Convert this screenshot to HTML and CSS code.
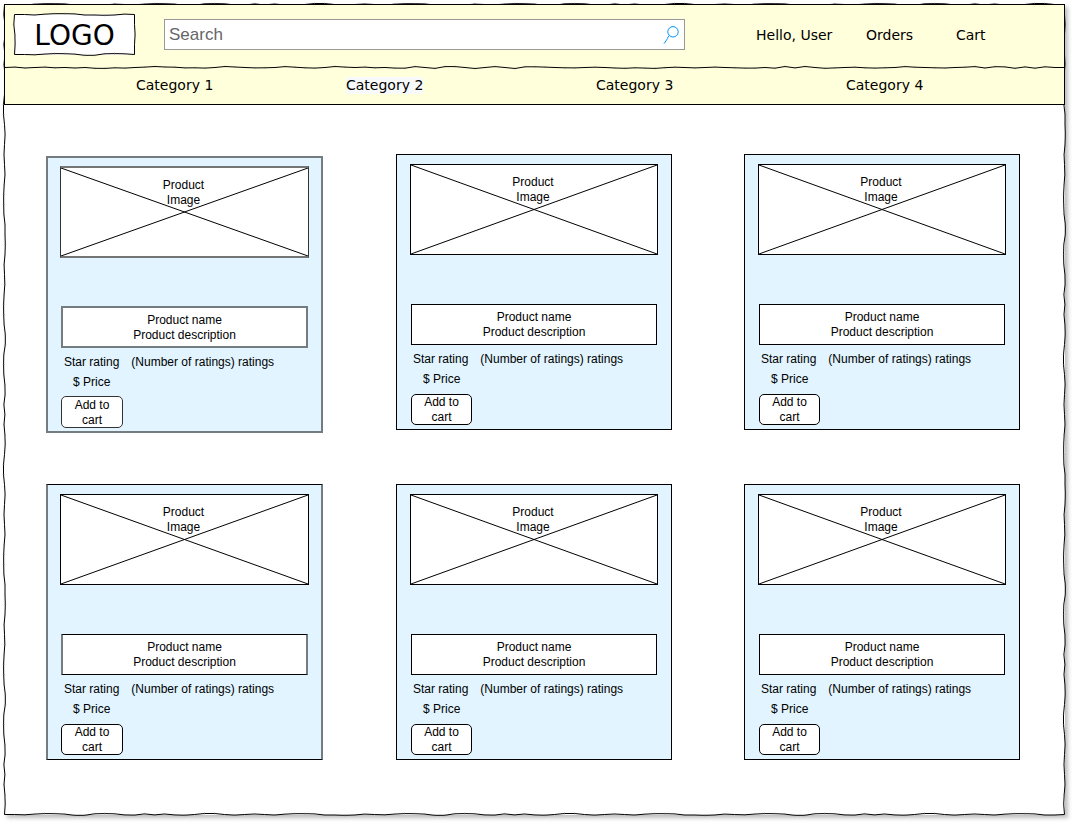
FILE: index.html
```html
<!DOCTYPE html>
<html lang="en">
<head>
<meta charset="utf-8">
<meta name="viewport" content="width=device-width, initial-scale=1">
<title>Store</title>
<link rel="stylesheet" href="styles.css">
</head>
<body>
<div class="page">
  <svg class="sketch" data-sketch="box" aria-hidden="true"></svg>
  <header class="header">
    <div class="topbar">
      <a class="logo" href="#"><svg class="sketch" data-sketch="box" aria-hidden="true"></svg>LOGO</a>
      <form class="search" role="search">
        <input class="search__input" type="text" placeholder="Search" aria-label="Search">
        <button class="search__button" type="button" aria-label="Submit search">
          <svg width="17" height="20" viewBox="0 0 17 20" aria-hidden="true"><circle cx="10" cy="6.8" r="5.2"/><path d="M6.3 10.6 4.9 12.1 4.7 13.4 1 18.6"/></svg>
        </button>
      </form>
      <nav class="account" aria-label="Account">
        <a href="#">Hello, User</a>
        <a href="#">Orders</a>
        <a href="#">Cart</a>
      </nav>
    </div>
    <nav class="categories" aria-label="Categories">
      <svg class="sketch" data-sketch="rule" aria-hidden="true"></svg>
      <a href="#">Category 1</a>
      <a class="is-active" href="#">Category 2</a>
      <a href="#">Category 3</a>
      <a href="#">Category 4</a>
    </nav>
  </header>
  <main class="products">
    <article class="card card--selected">
      <div class="card__image"><svg viewBox="0 0 100 100" preserveAspectRatio="none" aria-hidden="true"><path d="M0 0 100 100M100 0 0 100"/></svg><span>Product<br>Image</span></div>
      <h2 class="card__title">Product name<br>Product description</h2>
      <p class="card__rating"><span>Star rating</span><span>(Number of ratings) ratings</span></p>
      <p class="card__price">$ Price</p>
      <button class="card__button" type="button">Add to cart</button>
    </article>
    <article class="card">
      <div class="card__image"><svg viewBox="0 0 100 100" preserveAspectRatio="none" aria-hidden="true"><path d="M0 0 100 100M100 0 0 100"/></svg><span>Product<br>Image</span></div>
      <h2 class="card__title">Product name<br>Product description</h2>
      <p class="card__rating"><span>Star rating</span><span>(Number of ratings) ratings</span></p>
      <p class="card__price">$ Price</p>
      <button class="card__button" type="button">Add to cart</button>
    </article>
    <article class="card">
      <div class="card__image"><svg viewBox="0 0 100 100" preserveAspectRatio="none" aria-hidden="true"><path d="M0 0 100 100M100 0 0 100"/></svg><span>Product<br>Image</span></div>
      <h2 class="card__title">Product name<br>Product description</h2>
      <p class="card__rating"><span>Star rating</span><span>(Number of ratings) ratings</span></p>
      <p class="card__price">$ Price</p>
      <button class="card__button" type="button">Add to cart</button>
    </article>
    <article class="card card--edged">
      <div class="card__image"><svg viewBox="0 0 100 100" preserveAspectRatio="none" aria-hidden="true"><path d="M0 0 100 100M100 0 0 100"/></svg><span>Product<br>Image</span></div>
      <h2 class="card__title">Product name<br>Product description</h2>
      <p class="card__rating"><span>Star rating</span><span>(Number of ratings) ratings</span></p>
      <p class="card__price">$ Price</p>
      <button class="card__button" type="button">Add to cart</button>
    </article>
    <article class="card">
      <div class="card__image"><svg viewBox="0 0 100 100" preserveAspectRatio="none" aria-hidden="true"><path d="M0 0 100 100M100 0 0 100"/></svg><span>Product<br>Image</span></div>
      <h2 class="card__title">Product name<br>Product description</h2>
      <p class="card__rating"><span>Star rating</span><span>(Number of ratings) ratings</span></p>
      <p class="card__price">$ Price</p>
      <button class="card__button" type="button">Add to cart</button>
    </article>
    <article class="card">
      <div class="card__image"><svg viewBox="0 0 100 100" preserveAspectRatio="none" aria-hidden="true"><path d="M0 0 100 100M100 0 0 100"/></svg><span>Product<br>Image</span></div>
      <h2 class="card__title">Product name<br>Product description</h2>
      <p class="card__rating"><span>Star rating</span><span>(Number of ratings) ratings</span></p>
      <p class="card__price">$ Price</p>
      <button class="card__button" type="button">Add to cart</button>
    </article>
  </main>
</div>
<script src="sketch.js"></script>
</body>
</html>
```
FILE: styles.css
```css
* {
  box-sizing: border-box;
}

body {
  margin: 0;
  padding: 4px 7px 9px 4px;
  background: #fff;
  color: #000;
  font: 12px/15px "Liberation Sans", Arial, sans-serif;
}

a {
  color: inherit;
  text-decoration: none;
}

.page {
  position: relative;
  background: #fff;
  box-shadow: 3px 3px 4px rgba(0, 0, 0, 0.25);
}

.sketch {
  position: absolute;
  inset: 0;
  width: 100%;
  height: 100%;
  overflow: visible;
  fill: none;
  stroke: #000;
  pointer-events: none;
}

.sketch .tick {
  stroke: #555;
}

.header {
  position: relative;
  border: 1px solid #000;
  background: #ffffdc;
  font: 14px/17px "DejaVu Sans", Verdana, sans-serif;
}

.topbar {
  display: flex;
  align-items: center;
  padding: 9px 0 12px 9px;
}

.logo {
  position: relative;
  z-index: 0;
  width: 121px;
  height: 41px;
  margin-right: 29px;
  background: #fff;
  font-size: 28px;
  line-height: 43px;
  text-align: center;
}

.search {
  position: relative;
  flex: 1;
  display: flex;
  align-items: center;
  height: 31px;
  border: 1px solid #999;
  background: #fff;
}

.search__input {
  flex: 1;
  min-width: 0;
  padding: 0 4px;
  border: 0;
  background: none;
  font: 17px/29px "Liberation Sans", Arial, sans-serif;
}

.search__input::placeholder {
  color: #666;
  opacity: 1;
}

.search__button {
  display: flex;
  padding: 0 4px 0 0;
  border: 0;
  background: none;
}

.search__button svg {
  fill: none;
  stroke: #0095ff;
}

.account {
  display: grid;
  grid-template-columns: 110px 90px 108px;
  margin-left: 71px;
  padding-top: 2px;
}

.categories {
  position: relative;
  display: grid;
  grid-template-columns: 131fr 210fr 250fr 250fr 218fr;
  justify-items: start;
  padding: 10px 0;
}

.categories a:first-of-type {
  grid-column: 2;
}

.categories .is-active {
  background: #f8f9fa;
}

.products {
  position: relative;
  display: grid;
  grid-template-columns: 350fr 348fr 276fr;
  align-items: start;
  row-gap: 51px;
  padding: 49px 45px 55px 42px;
}

.card {
  width: 276px;
  padding: 9px 13px 4px;
  border: 1px solid #000;
  background: #e1f4ff;
}

.card__image {
  position: relative;
  height: 91px;
  margin-bottom: 49px;
  padding: 10px 2px 0 0;
  border: 1px solid #000;
  background: #fff;
  text-align: center;
}

.card__image svg {
  position: absolute;
  inset: 0;
  width: 100%;
  height: 100%;
  stroke: #000;
}

.card__image path {
  vector-effect: non-scaling-stroke;
}

.card__image span {
  position: relative;
}

.card__title {
  margin: 0 1px 7px;
  padding: 5px 0 4px;
  border: 1px solid #000;
  background: #fff;
  font: inherit;
  text-align: center;
}

.card__rating {
  display: flex;
  gap: 12px;
  margin: 0 0 5px 3px;
}

.card__price {
  margin: 0 0 7px 13px;
}

.card__button {
  display: block;
  width: 61px;
  height: 31px;
  margin-left: 1px;
  padding: 0 8px;
  border: 1px solid #000;
  border-radius: 5px;
  background: #fff;
  color: inherit;
  font: inherit;
}

.card--selected {
  width: 277px;
  margin-top: 2px;
  padding: 8px 12px 3px;
  border: 2px solid #757c80;
}

.card--selected .card__image {
  height: 92px;
  margin-bottom: 48px;
  border-color: #757575 #333;
  border-width: 2px 1px;
}

.card--selected .card__title {
  padding-bottom: 3px;
  border: 2px solid #757c80;
}

.card--selected .card__rating,
.card--edged .card__rating {
  margin-left: 4px;
}

.card--selected .card__price {
  margin-bottom: 6px;
}

.card--selected .card__button {
  width: 62px;
  height: 32px;
  padding-top: 1px;
  border-color: #333;
}

.card--edged {
  width: 277px;
  padding: 9px 12px 4px;
  border-color: #000 #757c80;
  border-width: 1px 2px;
}

.card--edged .card__title {
  border-color: #000 #757c80;
  border-width: 1px 2px;
}

.card--edged .card__button {
  width: 62px;
}
```
FILE: sketch.js
```js
// Draws the hand-drawn outlines: a polyline with a joint every 10px.
const STEP = 10;
const RULE = [0, -.4, .5, 0, -.4, .3, 0, .5, 0, .8, .9, .3, .6, 0, -.4, -1, -.5, -.3, .4, .3, .6, 0, -1, -.5, 0, .4, .3, 0, -.9, -.3, .3, .6, 0, -1, -.4, 0, -.4, .3, 0, .6, .7, -.9, 0, .9, -.9, -.9, 0, 1, 0, -.9, 0, 1, -.7, -.7, -.4, 0, .3, .4, 0, -.3, 0, .5, .8, .3, .6, .9, .2, -.3, 0, .4, 0, -.4, 0, .3, .6, .6, 0, .7, -1, .4, -1, 0, .8, .4, 0, -.3, .3, .6, .3, 0, -.9, -.3, 0, .3, .5, 0, -.3, -.9, .5, -.8, -.6, .8, -.6, .7, -.7, 0, 0];
const EDGE = [0, -1, -1, 0, .6, 0, -.5, 0, .5, -.3, -.8, -.8, -.6, .5, .5, .8, .5, -.4, 0, .3, -.4, -.9, -.8, -.4, .8, .8, -.7, -.9, -.7, .4, .6, -.6, .4, -.5, .4, .7];

function side(x, y, dx, dy, length, wave, shift) {
  const points = [];
  let ticks = "";
  const count = Math.ceil(length / STEP);
  for (let i = 0; i <= count; i++) {
    const d = Math.min(i * STEP, length);
    const o = i === 0 || i === count ? 0 : wave[(i + shift) % wave.length];
    const px = x + dx * d + dy * o;
    const py = y + dy * d + dx * o;
    points.push(px + " " + py);
    if (o) ticks += `M${px - dy} ${py - dx}L${px + dy} ${py + dx}`;
  }
  return `<path d="M${points.join("L")}"/><path class="tick" stroke-width=".4" d="${ticks}"/>`;
}

function draw() {
  document.querySelectorAll("[data-sketch]").forEach((svg) => {
    const { width, height } = svg.getBoundingClientRect();
    if (svg.dataset.sketch === "rule") {
      svg.innerHTML = side(0, .5, 1, 0, width, RULE, 0);
      return;
    }
    const w = width - 1;
    const h = height - 1;
    svg.innerHTML =
      side(.5, .5, 1, 0, w, EDGE, 6) +
      side(.5, h + .5, 1, 0, w, EDGE, 17) +
      side(.5, .5, 0, 1, h, EDGE, 27) +
      side(w + .5, .5, 0, 1, h, EDGE, 2);
  });
}

draw();
window.addEventListener("resize", draw);
```
